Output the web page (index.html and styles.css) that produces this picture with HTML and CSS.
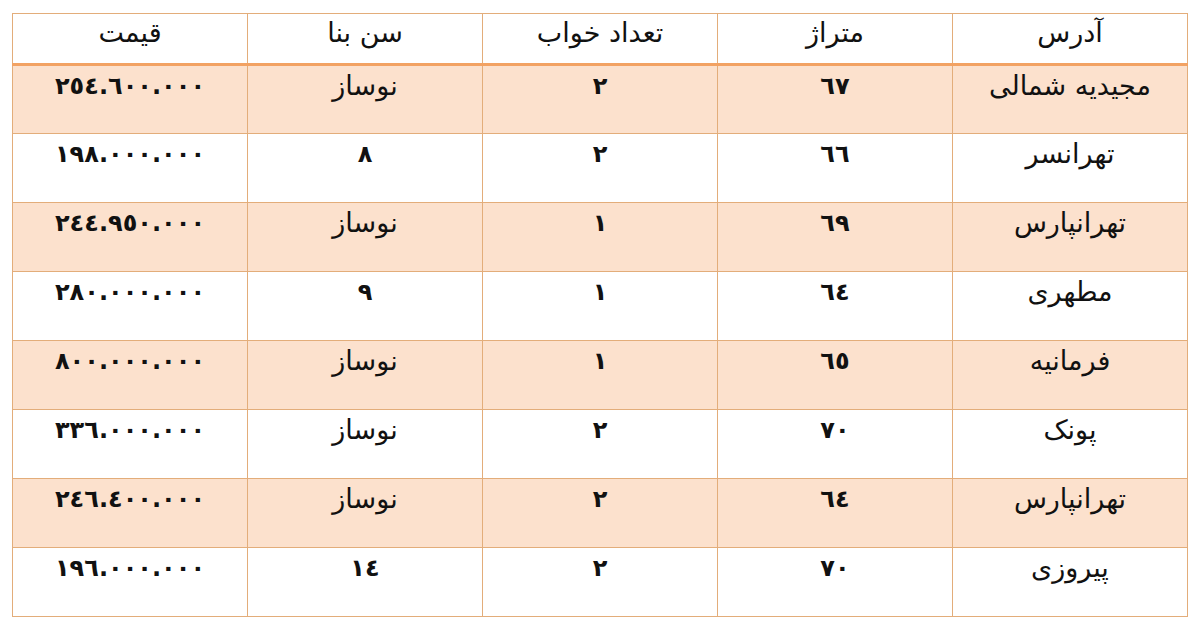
FILE: index.html
```html
<!DOCTYPE html>
<html lang="fa">
<head>
<meta charset="utf-8">
<link rel="stylesheet" href="styles.css">
</head>
<body>
<table class="prices" dir="rtl">
  <thead>
    <tr>
      <th>آدرس</th>
      <th>متراژ</th>
      <th>تعداد خواب</th>
      <th>سن بنا</th>
      <th>قیمت</th>
    </tr>
  </thead>
  <tbody>
    <tr class="alt"><td>مجیدیه شمالی</td><td class="num">٦٧</td><td class="num">٢</td><td>نوساز</td><td class="num">٢٥٤.٦٠٠.٠٠٠</td></tr>
    <tr><td>تهرانسر</td><td class="num">٦٦</td><td class="num">٢</td><td class="num">٨</td><td class="num">١٩٨.٠٠٠.٠٠٠</td></tr>
    <tr class="alt"><td>تهرانپارس</td><td class="num">٦٩</td><td class="num">١</td><td>نوساز</td><td class="num">٢٤٤.٩٥٠.٠٠٠</td></tr>
    <tr><td>مطهری</td><td class="num">٦٤</td><td class="num">١</td><td class="num">٩</td><td class="num">٢٨٠.٠٠٠.٠٠٠</td></tr>
    <tr class="alt"><td>فرمانیه</td><td class="num">٦٥</td><td class="num">١</td><td>نوساز</td><td class="num">٨٠٠.٠٠٠.٠٠٠</td></tr>
    <tr><td>پونک</td><td class="num">٧٠</td><td class="num">٢</td><td>نوساز</td><td class="num">٣٣٦.٠٠٠.٠٠٠</td></tr>
    <tr class="alt"><td>تهرانپارس</td><td class="num">٦٤</td><td class="num">٢</td><td>نوساز</td><td class="num">٢٤٦.٤٠٠.٠٠٠</td></tr>
    <tr><td>پیروزی</td><td class="num">٧٠</td><td class="num">٢</td><td class="num">١٤</td><td class="num">١٩٦.٠٠٠.٠٠٠</td></tr>
  </tbody>
</table>
</body>
</html>
```

FILE: styles.css
```css
html, body {
  margin: 0;
  padding: 0;
  background: #ffffff;
}

body {
  padding: 13px 12px 0 12px;
  font-family: "DejaVu Sans", "Noto Sans", sans-serif;
  color: #111111;
}

.prices {
  width: 1176px;
  border-collapse: collapse;
  table-layout: fixed;
  border: 1px solid #dfa978;
}

.prices th,
.prices td {
  width: 20%;
  border: 1px solid #e3ad7a;
  text-align: center;
  vertical-align: top;
  font-size: 27px;
  line-height: 32px;
}

.prices th {
  height: 51px;
  padding: 3px 0 0 0;
  box-sizing: border-box;
  font-weight: normal;
  border-bottom: 3px solid #f2a263;
  background: #ffffff;
}

.prices td {
  height: 69px;
  box-sizing: border-box;
  padding: 4px 0 0 0;
  background: #ffffff;
}

.prices tr.alt td {
  background: #fce1cd;
}

.prices td.num {
  font-weight: bold;
  font-size: 24px;
}
```
